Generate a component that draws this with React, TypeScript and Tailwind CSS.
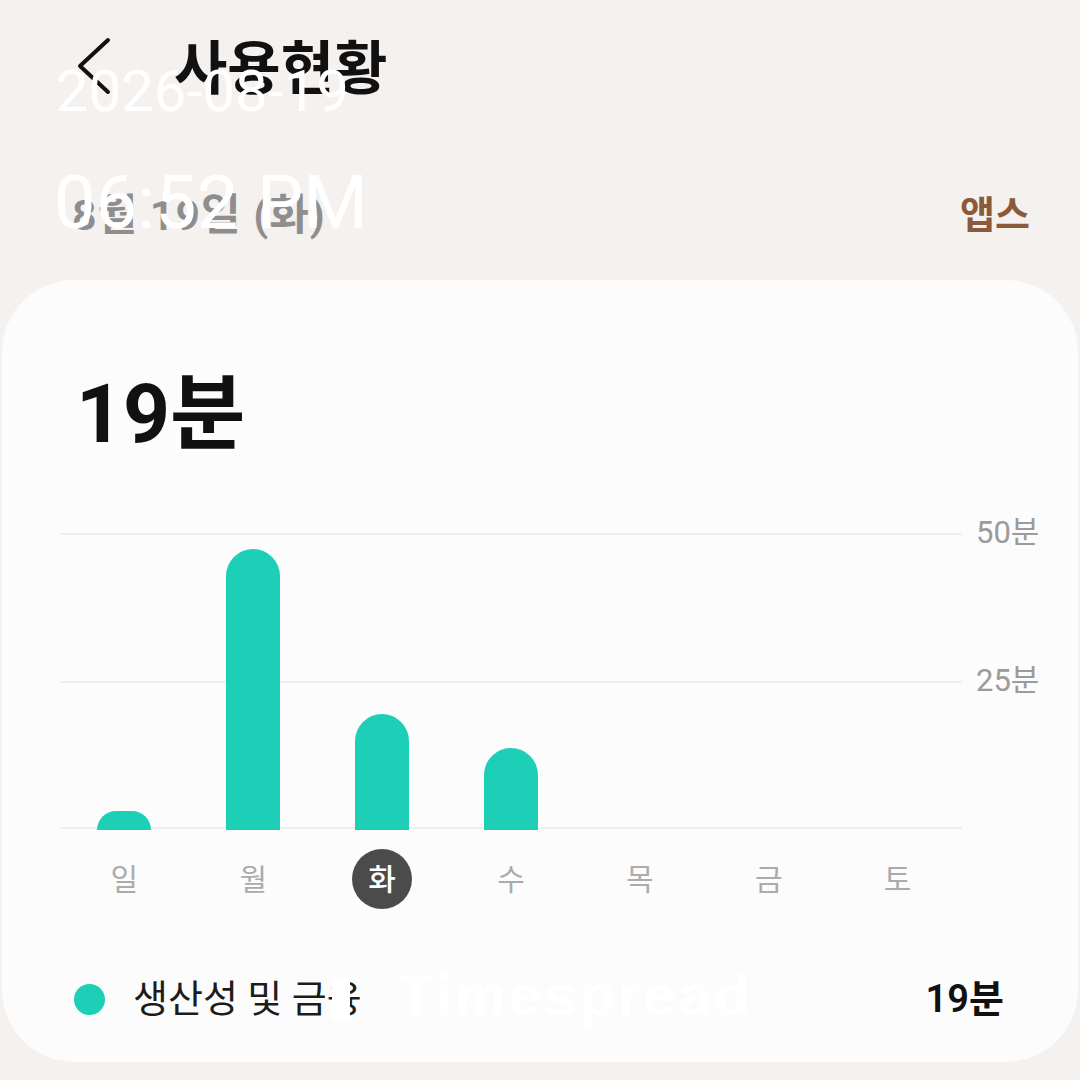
import React from "react";

const days = [
  { d: "일", h: 19 },
  { d: "월", h: 281 },
  { d: "화", h: 116, active: true },
  { d: "수", h: 82 },
  { d: "목", h: 0 },
  { d: "금", h: 0 },
  { d: "토", h: 0 },
];

const kr = { fontFamily: "Roboto, 'Noto Sans CJK KR', sans-serif" };

export default function App() {
  return (
    <div
      className="relative w-[1080px] h-[1080px] overflow-hidden bg-[#f4f1ee]"
      style={kr}
    >
      {/* header */}
      <div className="flex items-center h-[136px] pl-[76px] pt-[2px]">
        <svg width="36" height="60" viewBox="0 0 36 60" className="mt-[-6px]">
          <polyline
            points="32,4 4,30 32,56"
            fill="none"
            stroke="#111"
            strokeWidth="4"
            strokeLinecap="round"
            strokeLinejoin="round"
          />
        </svg>
        <h1 className="ml-[62px] text-[58px] font-bold text-[#111] leading-none">
          사용현황
        </h1>
      </div>

      <div className="flex items-center justify-between h-[144px] pl-[72px] pr-[50px] pt-[14px]">
        <span className="text-[43px] font-semibold text-[#8e8e8e] tracking-[1px]">
          8월 19일 (화)
        </span>
        <span className="text-[38px] font-bold text-[#8a5a3a]">앱스</span>
      </div>

      {/* card */}
      <div className="mx-[2px] h-[782px] rounded-[72px] bg-[#fcfcfc] pt-[93px]">
        <div className="pl-[74px] text-[82px] font-bold leading-none text-[#111]">
          19분
        </div>

        <div className="mt-[78px] flex pl-[58px]">
          <div className="w-[902px]">
            <div className="grid">
              <div className="[grid-area:1/1] flex flex-col h-[298px]">
                <div className="h-[148px] border-t-2 border-[#efefef]" />
                <div className="h-[148px] border-t-2 border-b-2 border-[#efefef]" />
              </div>
              <div className="[grid-area:1/1] grid grid-cols-7 items-end h-[297px]">
                {days.map((x) => (
                  <div key={x.d} className="flex justify-center">
                    {x.h > 0 && (
                      <div
                        className="w-[54px] rounded-t-full bg-[#1ecfb8]"
                        style={{ height: x.h }}
                      />
                    )}
                  </div>
                ))}
              </div>
            </div>
            <div className="grid grid-cols-7 mt-[18px]">
              {days.map((x) => (
                <div key={x.d} className="flex justify-center">
                  {x.active ? (
                    <div className="w-[60px] h-[60px] rounded-full bg-[#4b4b4b] flex items-center justify-center text-[30px] font-medium text-white">
                      {x.d}
                    </div>
                  ) : (
                    <div className="h-[60px] flex items-center text-[30px] text-[#ababab]">
                      {x.d}
                    </div>
                  )}
                </div>
              ))}
            </div>
          </div>
          <div className="ml-[14px] flex flex-col text-[31px] text-[#9b9b9b] leading-none">
            <span className="mt-[-16px]">50분</span>
            <span className="mt-[117px]">25분</span>
          </div>
        </div>

        <div className="mt-[62px] flex items-center pl-[72px] pr-[74px]">
          <span className="w-[31px] h-[31px] rounded-full bg-[#1ecfb8]" />
          <span className="ml-[28px] text-[38px] text-[#1c1c1c]">생산성 및 금융</span>
          <span className="ml-auto text-[38px] font-semibold text-[#111]">19분</span>
        </div>
      </div>

      {/* watermark overlays */}
      <div
        className="absolute left-[56px] top-[62px] text-[58px] text-white leading-none"
        style={{ fontFamily: "Roboto, sans-serif" }}
      >
        2026-08-19
      </div>
      <div
        className="absolute left-[54px] top-[166px] text-[74px] text-white leading-none"
        style={{ fontFamily: "Roboto, sans-serif" }}
      >
        06:52 PM
      </div>
      <div className="absolute left-[332px] top-[978px] w-[18px] h-[42px] bg-white" />
      <div
        className="absolute left-[398px] top-[966px] text-[58px] font-bold text-white leading-none tracking-[3px]"
        style={{ fontFamily: "'Liberation Sans', Arial, sans-serif" }}
      >
        Timespread
      </div>
    </div>
  );
}
